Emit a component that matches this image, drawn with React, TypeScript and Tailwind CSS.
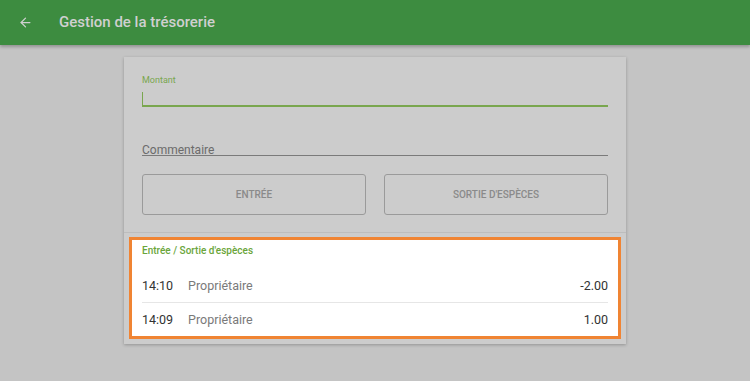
import React from 'react';
import { ArrowLeft } from 'lucide-react';

const ROWS = [
  { time: '14:10', who: 'Propriétaire', amount: '-2.00' },
  { time: '14:09', who: 'Propriétaire', amount: '1.00' }
];

export default function App() {
  return (
    <div className="h-[381px] w-[750px] bg-[#c4c4c4] font-['Roboto',sans-serif] overflow-hidden">
      <header className="relative z-10 flex h-[45px] items-center bg-[#3d8c40] shadow-[0_2px_3px_rgba(0,0,0,0.25)]">
        <ArrowLeft size={15} strokeWidth={2} className="ml-[18px] text-[#d0d0d0]" />
        <h1 className="ml-[26px] text-[15px] font-medium text-[#d0d0d0]">Gestion de la trésorerie</h1>
      </header>

      <div className="mx-auto mt-[12px] w-[502px] bg-[#cccccc] shadow-[0_1px_3px_rgba(0,0,0,0.25)]">
        <div className="px-[18px] pt-[18px] pb-[17px]">
          <label className="block text-[9px] leading-[11px] text-[#79a64e]">Montant</label>
          <div className="mt-[5px] flex h-[16px] items-center border-b-2 border-[#79a64e]">
            <span className="h-[13px] w-px bg-[#79a64e]" />
          </div>
          <div className="mt-[38px] border-b border-[#7a7a7a] text-[12px] leading-[10px] text-[#6b6b6b]">Commentaire</div>
          <div className="mt-[18px] grid grid-cols-2 gap-[18px]">
            <button type="button" className="h-[41px] rounded-[3px] border border-[#9a9a9a] text-[10px] font-medium text-[#8a8a8a]">
              ENTRÉE
            </button>
            <button type="button" className="h-[41px] rounded-[3px] border border-[#9a9a9a] text-[10px] font-medium text-[#8a8a8a]">
              SORTIE D'ESPÈCES
            </button>
          </div>
        </div>
        <div className="border-t border-[#bdbdbd] px-[5px] pt-[4px] pb-[5px]">
          <div className="border-[3px] border-[#f08433] bg-white px-[10px]">
            <h2 className="pt-[4px] text-[10px] font-medium leading-[14px] text-[#6aa53a]">Entrée / Sortie d'espèces</h2>
            <div className="mt-[12px]">
              {ROWS.map((row, i) => (
                <div
                  key={row.time}
                  className={`flex items-center text-[12.5px] ${i === 0 ? 'h-[33px] border-b border-[#e6e6e6]' : 'h-[33px] pt-[2px]'}`}
                >
                  <span className="w-[46px] text-[#333333]">{row.time}</span>
                  <span className="text-[#7a7a7a]">{row.who}</span>
                  <span className="ml-auto text-[#333333]">{row.amount}</span>
                </div>
              ))}
            </div>
          </div>
        </div>
      </div>
    </div>
  );
}
